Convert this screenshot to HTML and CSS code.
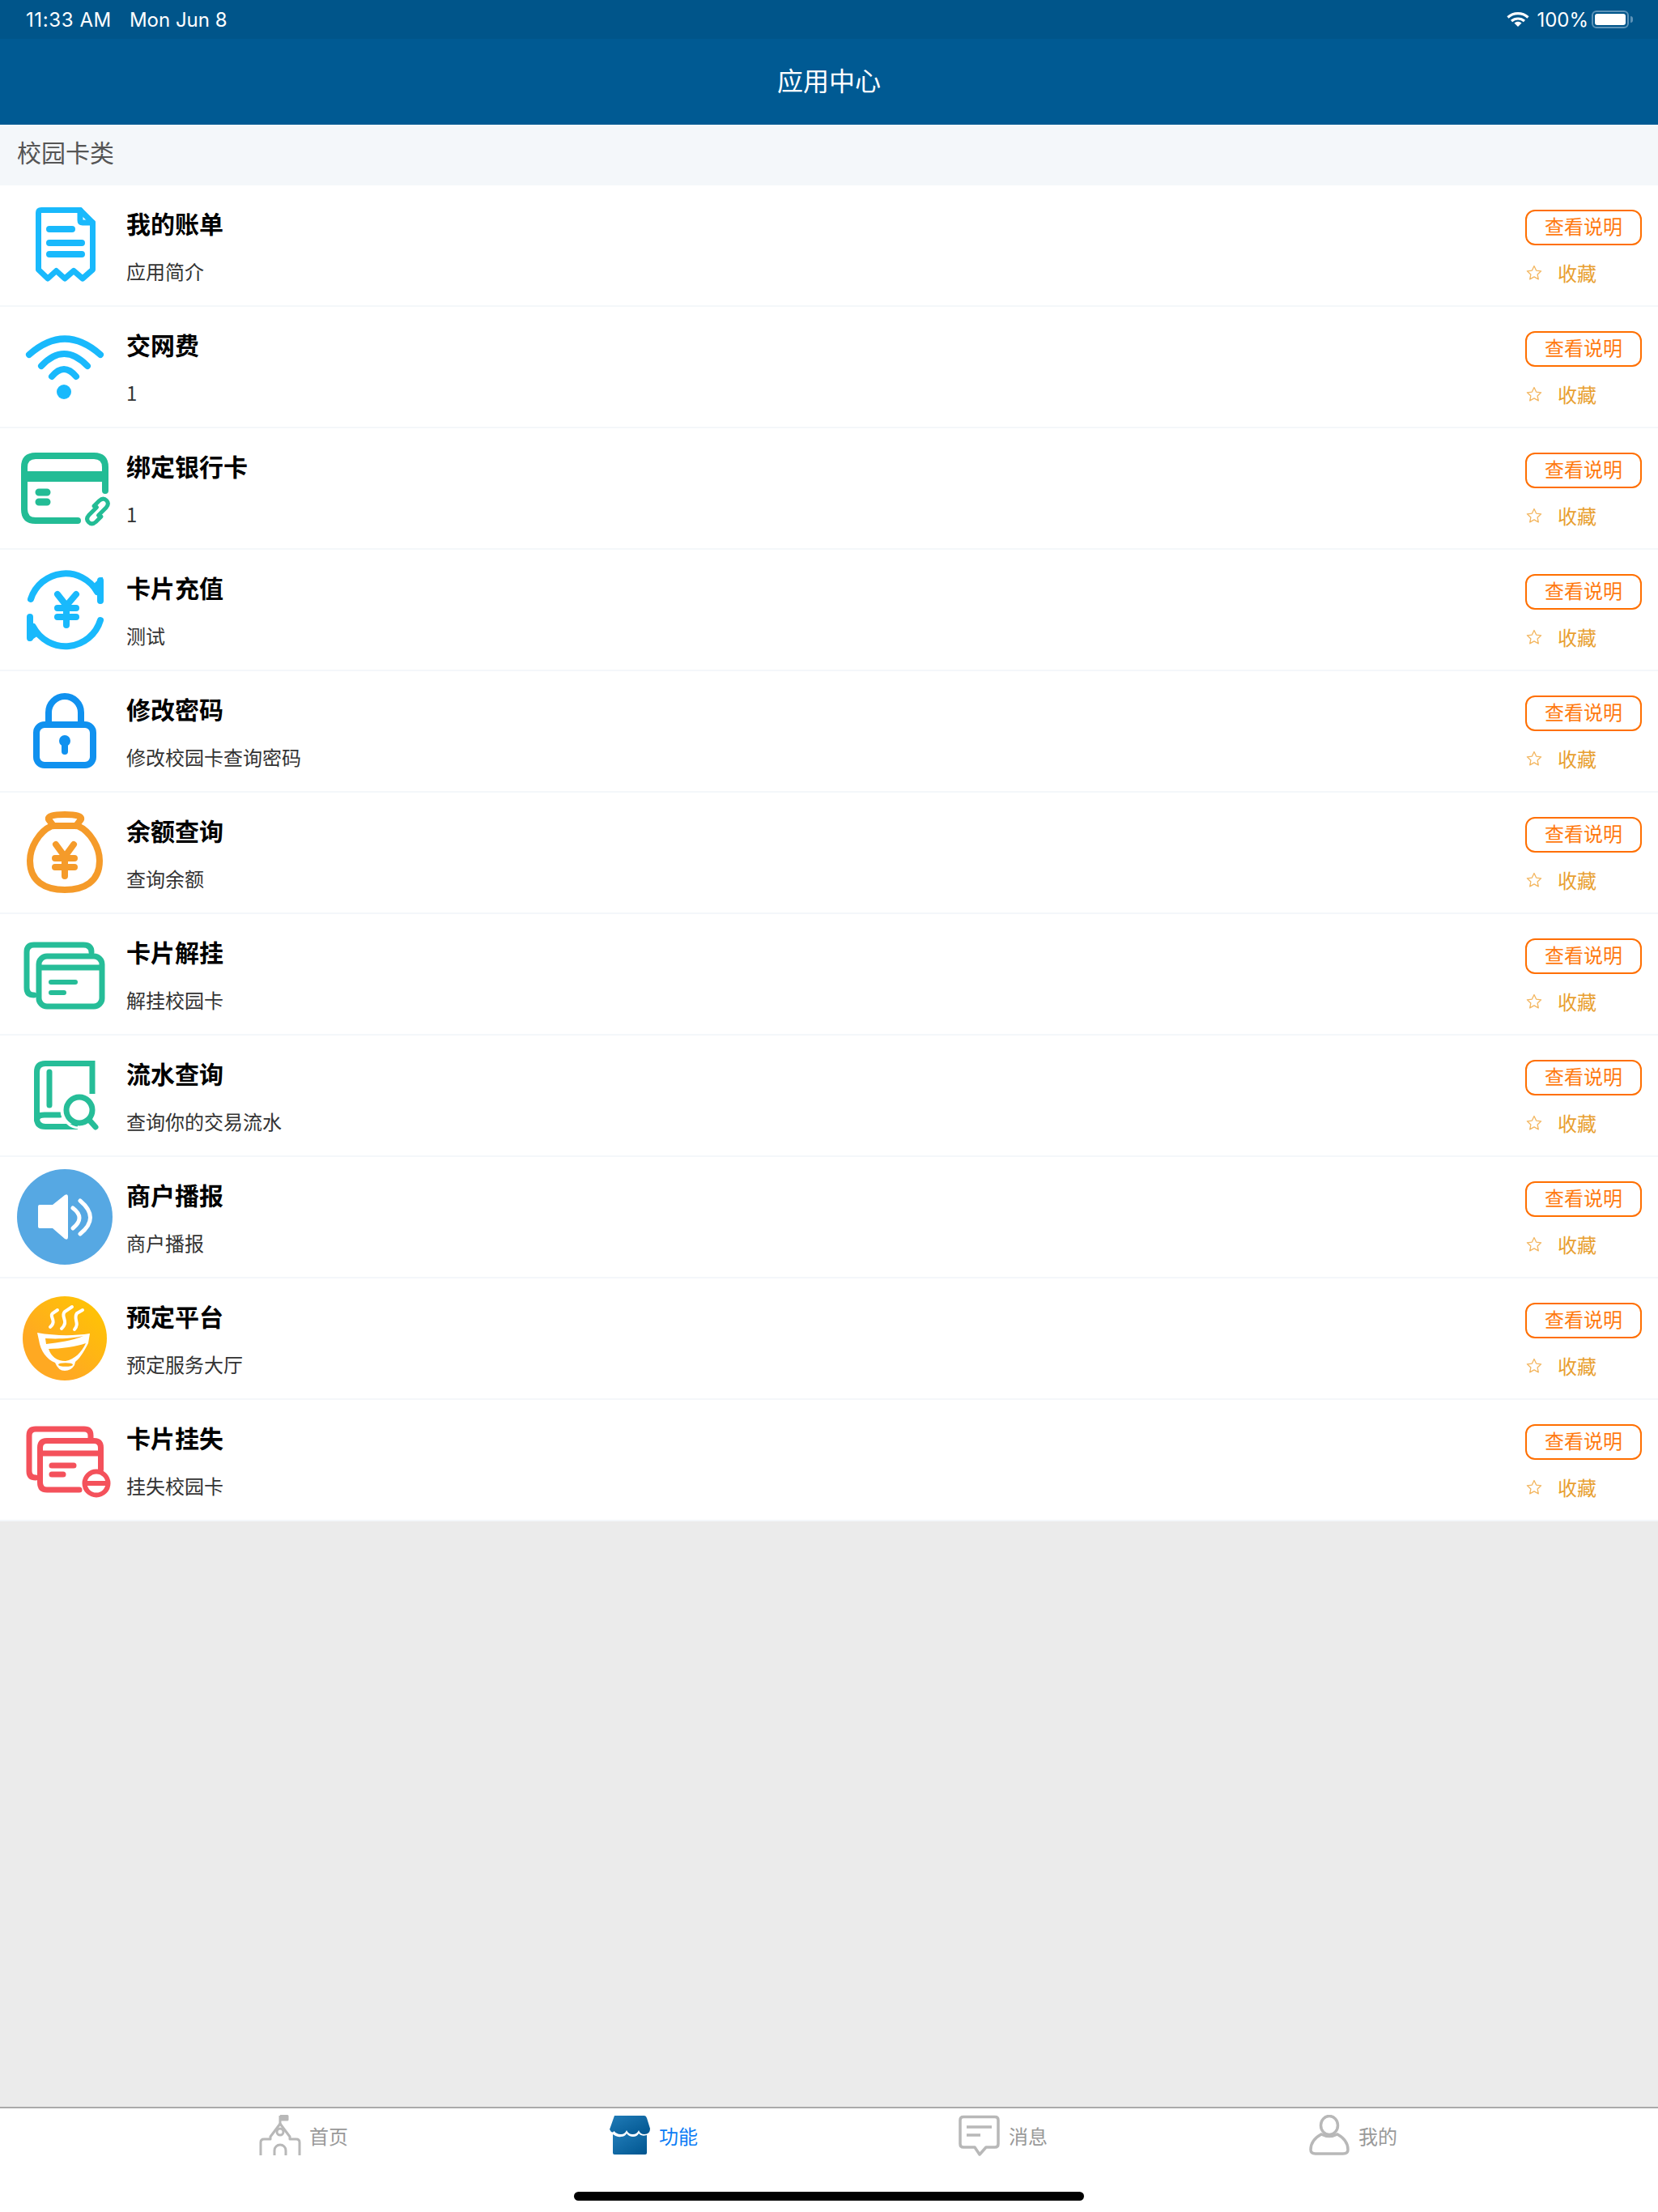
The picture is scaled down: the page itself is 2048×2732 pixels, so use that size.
FILE: index.html
```html
<!DOCTYPE html>
<html lang="zh-CN">
<head>
<meta charset="UTF-8">
<meta name="viewport" content="width=device-width, initial-scale=1.0">
<title>应用中心</title>
<link rel="stylesheet" href="styles.css">
</head>
<body>

<svg class="defs" width="0" height="0">
    <defs>
        <symbol id="star" viewBox="0 0 20 20">
            <path d="M10 1.5l2.6 5.6 6 .7-4.5 4.1 1.2 6-5.3-3-5.3 3 1.2-6L1.400 7.800l6-.7z" fill="none" stroke="#f3b65f" stroke-width="1.300" stroke-linejoin="round"/>
        </symbol>
        <linearGradient id="bowlFill" x1="0.85" y1="0.1" x2="0.3" y2="0.7">
            <stop offset="0" stop-color="#ffc305"/>
            <stop offset="1" stop-color="#ffa922"/>
        </linearGradient>
        <linearGradient id="shopFill" x1="0" y1="0" x2="1" y2="1">
            <stop offset="0" stop-color="#217cb8"/>
            <stop offset="1" stop-color="#00558f"/>
        </linearGradient>
    </defs>
</svg>

<header class="topbar">
    <div class="status">
        <div class="status-time"><span class="clock">11:33 AM</span><span>Mon Jun 8</span></div>
        <div class="status-right">
            <svg width="28" height="20" viewBox="0 0 28 20">
                <path d="M1.500 7.500C8.500 1 19.500 1 26.500 7.500" fill="none" stroke="#fff" stroke-width="3.200"/>
                <path d="M6 12C10.500 8 17.500 8 22 12" fill="none" stroke="#fff" stroke-width="3.200"/>
                <path d="M9.500 14.500C12 12.300 16 12.300 18.500 14.500L14 19z" fill="#fff"/>
            </svg>
            <span>100%</span>
            <div class="battery"><div class="battery-level"></div></div>
            <div class="battery-nub"></div>
        </div>
    </div>
    <div class="navbar">应用中心</div>
</header>

<main class="content">
    <div class="section-title">校园卡类</div>

    <div class="app-list">
        <div class="app-row">
            <svg class="app-icon" viewBox="0 0 150 148">
                <g fill="none" stroke="#19b9fc" stroke-width="7" stroke-linecap="round" stroke-linejoin="round">
                    <path d="M47.500 34V104L59 115l10.500-9.500L80 115l11-9.500L102 115l12.500-11V46L99 30.500H51q-3.500 0-3.500 3.500z"/>
                    <path d="M99 30.500V43q0 3 3 3h12.500"/>
                    <path stroke-width="8" d="M61 54H89M61 71H101M61 85H101"/>
                </g>
            </svg>
            <div class="app-text"><div class="app-name">我的账单</div><div class="app-desc">应用简介</div></div>
            <div class="app-actions"><div class="btn-info">查看说明</div><div class="fav"><svg class="fav-star"><use href="#star"/></svg><span>收藏</span></div></div>
        </div>

        <div class="app-row">
            <svg class="app-icon" viewBox="0 0 150 148">
                <g fill="none" stroke="#19b9fc" stroke-width="8" stroke-linecap="round">
                    <path d="M36 59Q80 20 124 59"/>
                    <path d="M51 73Q79 43 108 73"/>
                    <path d="M64 86Q79 68 94 86"/>
                </g>
                <circle cx="79" cy="105" r="9" fill="#19b9fc"/>
            </svg>
            <div class="app-text"><div class="app-name">交网费</div><div class="app-desc">1</div></div>
            <div class="app-actions"><div class="btn-info">查看说明</div><div class="fav"><svg class="fav-star"><use href="#star"/></svg><span>收藏</span></div></div>
        </div>

        <div class="app-row">
            <svg class="app-icon" viewBox="0 0 150 148">
                <g fill="none" stroke="#23bc95" stroke-linecap="round">
                    <path stroke-width="8" d="M96 114H44Q30 114 30 100V48Q30 34 44 34H116Q130 34 130 48V77"/>
                    <path stroke-width="13" stroke-linecap="butt" d="M30 59.500H130"/>
                    <path stroke-width="9" d="M48 79H58M48 91H58"/>
                    <g stroke-width="5">
                        <path d="M119.500 97.500L110 107Q105.500 112 109.500 116Q113.500 120 118.500 115.500L125 109"/>
                        <path d="M121.500 107.500L131 98Q135.500 93 131.500 89Q127.500 85 122.500 89.500L116 96"/>
                    </g>
                </g>
            </svg>
            <div class="app-text"><div class="app-name">绑定银行卡</div><div class="app-desc">1</div></div>
            <div class="app-actions"><div class="btn-info">查看说明</div><div class="fav"><svg class="fav-star"><use href="#star"/></svg><span>收藏</span></div></div>
        </div>

        <div class="app-row">
            <svg class="app-icon" viewBox="0 0 150 148">
                <g fill="none" stroke="#19b9fc" stroke-width="8" stroke-linecap="round">
                    <path d="M38 61A45 45 0 0 1 120 52"/>
                    <path d="M124 87A45 45 0 0 1 41 95"/>
                    <path d="M124 38V63M37 83V109"/>
                    <path stroke-width="8" d="M71 55L82 69 94 55M71 72H94M71 83H94M82 69V93"/>
                </g>
                <path d="M116 42L124 34H127V62L120 54zM34 85V112L37 113 47 106 41 95z" fill="#19b9fc"/>
            </svg>
            <div class="app-text"><div class="app-name">卡片充值</div><div class="app-desc">测试</div></div>
            <div class="app-actions"><div class="btn-info">查看说明</div><div class="fav"><svg class="fav-star"><use href="#star"/></svg><span>收藏</span></div></div>
        </div>

        <div class="app-row">
            <svg class="app-icon" viewBox="0 0 150 148">
                <g fill="none" stroke="#1091ef" stroke-width="8">
                    <rect x="45" y="66" width="70" height="50" rx="10"/>
                    <path d="M60 62V51a20 20 0 0 1 40 0V62"/>
                </g>
                <circle cx="80" cy="86" r="7" fill="#1091ef"/>
                <path d="M80 88V99" stroke="#1091ef" stroke-width="8" stroke-linecap="round"/>
            </svg>
            <div class="app-text"><div class="app-name">修改密码</div><div class="app-desc">修改校园卡查询密码</div></div>
            <div class="app-actions"><div class="btn-info">查看说明</div><div class="fav"><svg class="fav-star"><use href="#star"/></svg><span>收藏</span></div></div>
        </div>

        <div class="app-row">
            <svg class="app-icon" viewBox="0 0 150 148">
                <g fill="none" stroke="#f59b2a" stroke-width="8" stroke-linecap="round" stroke-linejoin="round">
                    <path d="M64 41C48 48 37 68 37 84C37 110 56 120 80 120C104 120 123 110 123 84C123 68 112 48 96 41Z"/>
                    <path d="M66 41L60 33Q58 27 80 27Q102 27 100 33L94 41"/>
                    <path d="M69 64L80 79 91 64M68 81H92M68 92H92M80 79V103"/>
                </g>
            </svg>
            <div class="app-text"><div class="app-name">余额查询</div><div class="app-desc">查询余额</div></div>
            <div class="app-actions"><div class="btn-info">查看说明</div><div class="fav"><svg class="fav-star"><use href="#star"/></svg><span>收藏</span></div></div>
        </div>

        <div class="app-row">
            <svg class="app-icon" viewBox="0 0 150 148">
                <g fill="none" stroke="#26bd98" stroke-width="7" stroke-linecap="round">
                    <path d="M42 100Q33 100 33 91V47Q33 38 42 38H103Q113 38 113 47"/>
                    <rect x="48" y="52" width="78" height="62" rx="10"/>
                    <path stroke-linecap="butt" d="M48 66H126"/>
                    <path stroke-width="6" d="M63 84H93M63 97H79"/>
                </g>
            </svg>
            <div class="app-text"><div class="app-name">卡片解挂</div><div class="app-desc">解挂校园卡</div></div>
            <div class="app-actions"><div class="btn-info">查看说明</div><div class="fav"><svg class="fav-star"><use href="#star"/></svg><span>收藏</span></div></div>
        </div>

        <div class="app-row">
            <svg class="app-icon" viewBox="0 0 150 148">
                <g fill="none" stroke="#26bd98" stroke-width="7" stroke-linecap="round">
                    <path stroke-linecap="butt" d="M114 72V34.500H56Q45.500 34.500 45.500 45V102Q45.500 112.500 56 112.500H96"/>
                    <path d="M45.500 104Q45.500 98 55 98H74"/>
                    <path d="M61 45V86"/>
                    <circle cx="98" cy="92" r="22" stroke="#fff" stroke-width="3"/>
                    <circle cx="98" cy="92" r="16"/>
                    <path d="M110 104L118 113"/>
                </g>
            </svg>
            <div class="app-text"><div class="app-name">流水查询</div><div class="app-desc">查询你的交易流水</div></div>
            <div class="app-actions"><div class="btn-info">查看说明</div><div class="fav"><svg class="fav-star"><use href="#star"/></svg><span>收藏</span></div></div>
        </div>

        <div class="app-row">
            <svg class="app-icon" viewBox="0 0 150 148">
                <circle cx="80" cy="74" r="59" fill="#56a8e3"/>
                <path d="M49 59H65L80 47Q84 45 84 49V99Q84 103 80 101L65 88H49Q47 88 47 86V61Q47 59 49 59Z" fill="#fff"/>
                <g fill="none" stroke="#fff" stroke-width="5" stroke-linecap="round">
                    <path d="M90 63Q106 75 90 88"/>
                    <path d="M99 54Q124 75 99 95"/>
                </g>
            </svg>
            <div class="app-text"><div class="app-name">商户播报</div><div class="app-desc">商户播报</div></div>
            <div class="app-actions"><div class="btn-info">查看说明</div><div class="fav"><svg class="fav-star"><use href="#star"/></svg><span>收藏</span></div></div>
        </div>

        <div class="app-row">
            <svg class="app-icon" viewBox="0 0 150 148">
                <circle cx="80" cy="74" r="52" fill="url(#bowlFill)"/>
                <g fill="none" stroke="#fff" stroke-width="4" stroke-linecap="round">
                    <path d="M62 60C71 52 60 47 65 43L71 39"/>
                    <path d="M76 62C86 53 74 47 80 41L89 35"/>
                    <path d="M92 63C99 55 90 50 95 43L102 39"/>
                </g>
                <path d="M46 67C68 71 92 71 111 68L109 80C103 92 98 99 93 103L92 107Q88 114 80 114Q72 114 68 104C58 100 50 90 48 76Z" fill="#fff"/>
                <path d="M56 74C72 75 90 74 103 71C90 77 72 79 57 81Z" fill="#ffb018"/>
                <path d="M60 87C75 87 95 84 106 80C101 91 92 100 81 102C70 102 63 96 60 87Z" fill="#ffb018"/>
                <ellipse cx="81" cy="106.500" rx="9" ry="2.300" fill="#ffb018"/>
            </svg>
            <div class="app-text"><div class="app-name">预定平台</div><div class="app-desc">预定服务大厅</div></div>
            <div class="app-actions"><div class="btn-info">查看说明</div><div class="fav"><svg class="fav-star"><use href="#star"/></svg><span>收藏</span></div></div>
        </div>

        <div class="app-row">
            <svg class="app-icon" viewBox="0 0 150 148">
                <g fill="none" stroke="#f4515b" stroke-width="7" stroke-linecap="round">
                    <path d="M44 96Q36 96 36 88V44Q36 36 44 36H104Q112 36 112 44V48"/>
                    <path d="M98 111H58Q49.500 111 49.500 102V59Q49.500 50.500 58 50.500H116Q124.500 50.500 124.500 59V86"/>
                    <path stroke-linecap="butt" d="M49.500 66H124.500"/>
                    <path d="M64 81H91M64 92H78"/>
                    <circle cx="119" cy="103" r="14.500" stroke-width="6"/>
                    <path stroke-width="6" stroke-linecap="butt" d="M104 103H134"/>
                </g>
            </svg>
            <div class="app-text"><div class="app-name">卡片挂失</div><div class="app-desc">挂失校园卡</div></div>
            <div class="app-actions"><div class="btn-info">查看说明</div><div class="fav"><svg class="fav-star"><use href="#star"/></svg><span>收藏</span></div></div>
        </div>
    </div>
</main>

<footer class="tabbar">
    <nav class="tabs">
        <div class="tab">
            <svg class="tab-icon" viewBox="0 0 52 52">
                <g fill="none" stroke="#b8b8b8" stroke-width="3" stroke-linejoin="round">
                    <path d="M26 11V1"/>
                    <path d="M26 1.500H35V6H26" fill="#b8b8b8"/>
                    <path d="M2 50V34Q2 30 6 30H14V27L26 11 38 27V30H46Q50 30 50 34V50"/>
                    <path d="M19 50V44a7 7 0 0 1 14 0V50"/>
                    <circle cx="26" cy="21" r="4"/>
                </g>
            </svg>
            <span>首页</span>
        </div>
        <div class="tab tab-active">
            <svg class="tab-icon" viewBox="0 0 52 52">
                <path d="M7 1H44Q46 1 47 4L51 17Q51 24 44 24Q38.500 24 37 19Q35 24 29.500 24Q24 24 22 19Q20 24 15 24Q9 24 6.500 20Q4 24 1 18Z" fill="url(#shopFill)"/>
                <path d="M5 24Q10 28 15 27Q20 27 22 23Q25 27 30 27Q35 27 37 23Q40 27 47 25V47Q47 49 45 49H7Q5 49 5 47Z" fill="url(#shopFill)"/>
            </svg>
            <span>功能</span>
        </div>
        <div class="tab">
            <svg class="tab-icon" viewBox="0 0 52 52">
                <g fill="none" stroke="#b8b8b8" stroke-linejoin="round">
                    <path stroke-width="3.500" d="M6 2.500H45Q49 2.500 49 6.500V36Q49 40 45 40H34L26 49 20 40H6Q2 40 2 36V6.500Q2 2.500 6 2.500Z"/>
                    <path stroke-width="3.500" d="M10 15H41M10 25H27"/>
                </g>
            </svg>
            <span>消息</span>
        </div>
        <div class="tab">
            <svg class="tab-icon" viewBox="0 0 52 52">
                <g fill="none" stroke="#b8b8b8" stroke-width="3.500">
                    <ellipse cx="26" cy="13" rx="10.500" ry="11.500"/>
                    <path d="M16 24C7 29 3 36 3 43Q3 48 9 48H43Q49 48 49 43C49 36 45 29 36 24Q26 29 16 24Z"/>
                </g>
            </svg>
            <span>我的</span>
        </div>
    </nav>
    <div class="home-bar"></div>
</footer>

</body>
</html>
```

FILE: styles.css
```css
/* App centre page */
html, body {
    margin: 0;
    padding: 0;
}
body {
    width: 2048px;
    height: 2732px;
    display: flex;
    flex-direction: column;
    overflow: hidden;
    background-color: #fff;
    font-family: "Noto Sans CJK SC", "Noto Sans", sans-serif;
}
.defs {
    position: absolute;
}

/* top bars */
.topbar {
    color: #fff;
}
.status {
    height: 48px;
    padding: 0 31px 0 32px;
    display: flex;
    justify-content: space-between;
    align-items: center;
    background-color: #00558a;
    font-family: Inter, "Noto Sans", sans-serif;
    font-size: 24px;
}
.status-time {
    display: flex;
    gap: 22px;
}
.clock {
    letter-spacing: 0.6px;
}
.status-right {
    display: flex;
    align-items: center;
}
.status-right span {
    margin: 0 4px 0 9px;
}
.battery {
    width: 46px;
    height: 22px;
    box-sizing: border-box;
    padding: 2px;
    border: 2px solid #5d93b8;
    border-radius: 6px;
}
.battery-level {
    height: 100%;
    border-radius: 3px;
    background-color: #fff;
}
.battery-nub {
    width: 3px;
    height: 8px;
    margin-left: 2px;
    border-radius: 0 3px 3px 0;
    background-color: #5d93b8;
}
.navbar {
    height: 106px;
    line-height: 100px;
    text-align: center;
    background-color: #005a93;
    font-size: 32px;
}

/* list */
.content {
    flex: 1;
    background-color: #ebebeb;
}
.section-title {
    height: 75px;
    line-height: 67px;
    padding-left: 21px;
    background-color: #f4f7fa;
    color: #555;
    font-size: 30px;
}
.app-row {
    height: 150px;
    box-sizing: border-box;
    display: flex;
    align-items: flex-start;
    border-bottom: 2px solid #f4f7fa;
    background-color: #fff;
}
.app-icon {
    width: 150px;
    height: 148px;
    flex-shrink: 0;
}
.app-text {
    flex: 1;
    padding: 26px 0 0 6px;
}
.app-name {
    height: 44px;
    line-height: 40px;
    color: #000;
    font-size: 30px;
    font-weight: bold;
}
.app-desc {
    height: 44px;
    line-height: 40px;
    margin-top: 16px;
    color: #333;
    font-size: 24px;
}
.app-actions {
    width: 144px;
    padding: 30px 20px 0 0;
}
.btn-info {
    height: 44px;
    box-sizing: border-box;
    border: 2px solid #ff6f00;
    border-radius: 12px;
    line-height: 35px;
    text-align: center;
    color: #ff7a10;
    font-size: 24px;
}
.fav {
    height: 44px;
    margin-top: 12px;
    display: flex;
    align-items: center;
    color: #e8a030;
    font-size: 24px;
}
.fav span {
    margin-bottom: 2px;
}
.fav-star {
    width: 20px;
    height: 20px;
    margin: 0 19px 0 1px;
}

/* bottom tabs */
.tabbar {
    height: 130px;
    box-sizing: border-box;
    border-top: 2px solid #aaa;
    background-color: #fff;
}
.tabs {
    height: 68px;
    padding: 0 161px 0 159px;
    display: grid;
    grid-template-columns: repeat(4, 1fr);
}
.tab {
    display: flex;
    justify-content: center;
    align-items: center;
    gap: 10px;
    color: #999;
    font-size: 24px;
}
.tab span {
    margin-bottom: 2px;
}
.tab-active {
    color: #0a7cf5;
}
.tab-icon {
    width: 52px;
    height: 52px;
}
.home-bar {
    width: 630px;
    height: 11px;
    margin: 35px auto 0;
    border-radius: 6px;
    background-color: #000;
}
```
